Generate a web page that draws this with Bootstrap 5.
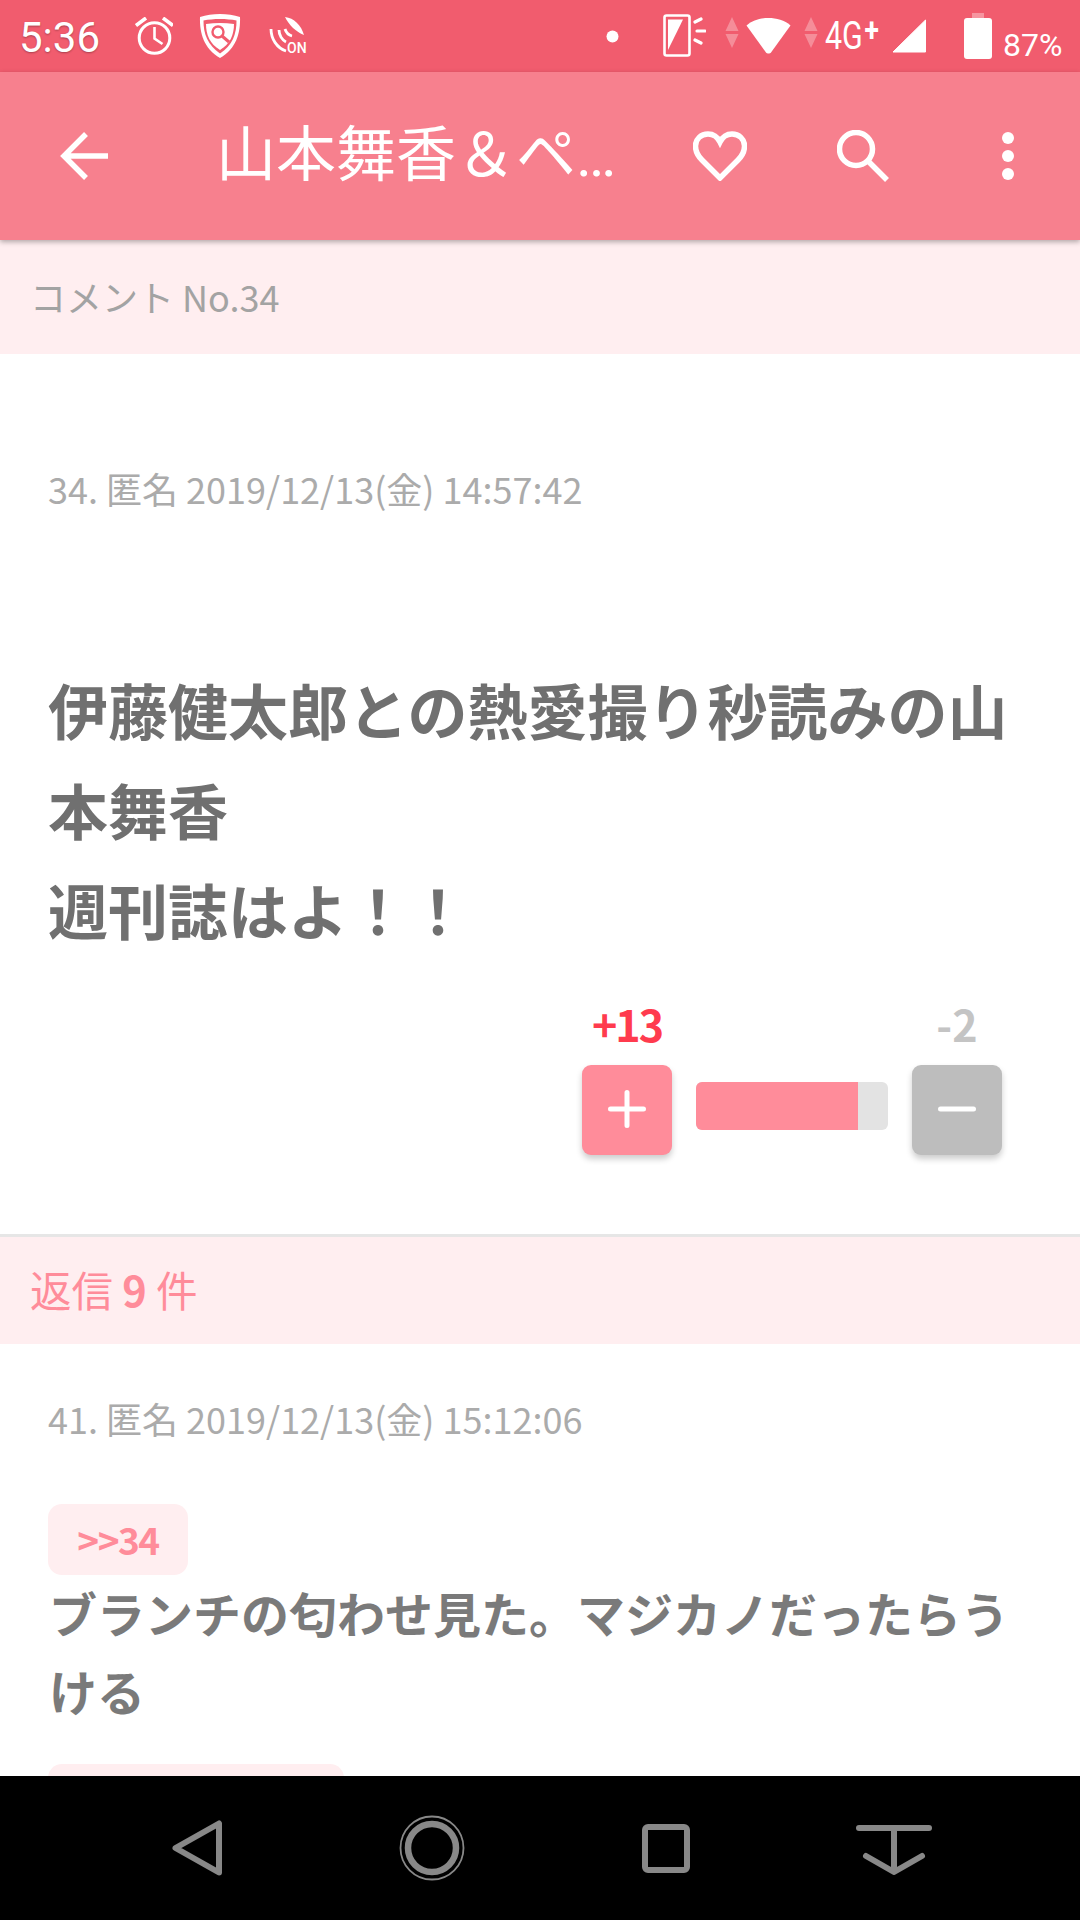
<!DOCTYPE html>
<html lang="ja">
<head>
    <meta charset="UTF-8">
    <meta name="viewport" content="width=device-width, initial-scale=1.0">
    <title>コメント No.34</title>
    <link rel="stylesheet" href="https://cdn.jsdelivr.net/npm/bootstrap@5.3.3/dist/css/bootstrap.min.css">
    <script src="https://cdn.jsdelivr.net/npm/bootstrap@5.3.3/dist/js/bootstrap.bundle.min.js"></script>
<style>
        body {
            font-family: "Noto Sans CJK JP", "Noto Sans", sans-serif;
            background: #fff;
        }
        .screen { width: 1080px; height: 1920px; }
        .flex-none { flex: none; }

        .status-bar { height: 72px; background: #f15c6e; color: #fff; font-family: Roboto, sans-serif; }
        .status-bar svg { display: block; flex: none; }
        .status-time { font-size: 42px; margin: 4px 0 0 19px; width: 116px; line-height: 68px; text-shadow: 0 1px 2px rgba(0,0,0,.3); }
        .ico-shield { margin-left: 25px; }
        .ico-wireless { margin-left: 26px; }
        .ico-dot { margin-left: auto; }
        .ico-phone { margin-left: 44px; }
        .ico-updown { margin: 0 0 7px 19px; }
        .ico-updown.second { margin-left: 13px; }
        .ico-wifi { margin-left: 7px; }
        .status-4g { font-size: 38px; line-height: 1; width: 56px; margin-left: 7px; transform: scaleX(.8); transform-origin: left; white-space: nowrap; }
        .status-4g span { font-size: 33px; font-weight: 700; position: relative; top: -8px; margin-left: 2px; }
        .ico-signal { margin-left: 11px; }
        .ico-batt { margin-left: 38px; }
        .status-pct { font-size: 32px; line-height: 1; width: 88px; padding-left: 11px; margin-top: 18px; white-space: nowrap; }

        .app-bar { height: 168px; background: #f7808e; color: #fff; box-shadow: 0 2px 5px rgba(0,0,0,.3); z-index: 2; }
        .ico-back { margin-left: 60px; }
        .app-title { font-family: Roboto, "Noto Sans CJK JP", sans-serif; font-size: 60px; font-weight: 400; line-height: 1; width: 477px; margin: 0 0 0 108px; white-space: nowrap; }
        .ico-search { margin-left: 90px; }
        .ico-more { margin-left: 113px; }

        .sect-head { background: #ffeef0; padding-left: 30px; }
        .sect-comment { height: 114px; font-size: 36px; color: #a3a3a3; padding-bottom: 2px; }
        .sect-reply { height: 107px; font-size: 41.500px; color: #ff8c9a; padding-bottom: 2px; }

        .post { padding: 107px 30px 79px 48px; border-bottom: 3px solid #e6e6e6; }
        .post-meta { font-size: 36px; line-height: 54px; color: #ababab; white-space: nowrap; }
        .post-title { font-size: 60px; line-height: 100px; font-weight: 700; color: #707070; margin: 144px -10px 0 0; }

        .vote { width: 420px; margin: 40px 48px 0 auto; }
        .vote-count { width: 90px; height: 50px; line-height: 48px; font-size: 43px; font-weight: 700; text-align: center; }
        .vote-plus { color: #ff3b4e; letter-spacing: -2px; }
        .vote-minus { color: #c4c4c4; }
        .vote-btn { width: 90px; height: 90px; border: 0; border-radius: 9px; padding: 0; box-shadow: 0 4px 6px rgba(0,0,0,.2); color: #fff; }
        .vote-btn.up { background: #ff8c9a; }
        .vote-btn.down { background: #bdbdbd; }
        .vote-btn svg { margin-top: -2px; }
        .vote-bar { width: 192px; height: 48px; margin-top: 17px; background: #e3e3e3; border-radius: 6px; }
        .vote-bar .progress-bar { background: #ff8c9a; }

        .reply { padding: 47px 40px 0 48px; }
        .quote-tag { display: block; width: 140px; height: 71px; margin: 59px 0 0 0; background: #ffeef0; border-radius: 14px; color: #ff8c9a; font-size: 37px; font-weight: 700; line-height: 71px; text-align: center; letter-spacing: -1.500px; }
        .quote-next { width: 296px; margin-top: 35px; }
        .reply-body { font-size: 48px; line-height: 78px; font-weight: 700; color: #7a7a7a; margin: -2px -10px 0 1px; }

        .nav-keys { height: 144px; background: #000; }
        .key-back { margin-left: 172px; }
        .key-home { margin-left: 177px; }
        .key-recent { margin-left: 177px; }
        .key-hide { margin-left: 166px; margin-top: 3px; }
</style>
</head>
<body>
    <div class="screen d-flex flex-column overflow-hidden">

        <!-- android status bar -->
        <div class="status-bar d-flex align-items-center flex-none">
            <span class="status-time">5:36</span>
            <svg width="38" height="38" viewBox="0 0 38 38" fill="none" stroke="#fff">
                <circle cx="19.500" cy="21" r="15.300" stroke-width="3"/>
                <path d="M19.500 10v11.500l8 5.500" stroke-width="2.600"/>
                <path d="M1 8.500L11 1M38 8.500L28 1" stroke-width="3.600"/>
            </svg>
            <svg width="44" height="46" viewBox="0 0 42 46" class="ico-shield">
                <path d="M21 1c7 0 14 1 20 3 .6 16-4 32-20 41C5 36 .4 20 1 4c6-2 13-3 20-3z" fill="#fff"/>
                <path d="M4.500 7.500c10-2 23-2 33 0 .2 13-4 25-16.500 33C9 32.500 4.300 21 4.500 7.500z" fill="#f15c6e"/>
                <path d="M7 11c9-1.500 19-1.500 28 0 0 11-4 20-14 26C11 31 7 22 7 11z" fill="#fff"/>
                <circle cx="19" cy="19" r="5.500" fill="none" stroke="#f15c6e" stroke-width="2.400"/>
                <path d="M23 23l7 6" stroke="#f15c6e" stroke-width="3"/>
            </svg>
            <svg width="40" height="38" viewBox="0 0 40 38" class="ico-wireless">
                <path d="M17 0c9 1 16 8 19 18C28 15 21 8 17 0z" fill="#fff"/>
                <g fill="none" stroke="#fff" stroke-width="2.800">
                    <path d="M3 12c0 10 6 19 15 22"/>
                    <path d="M11 13c0 5 3 10 7 12"/>
                    <path d="M17 12c1 3 3 6 7 7"/>
                </g>
                <text x="19" y="36" font-size="14" font-weight="500" fill="#fff" font-family="Roboto, sans-serif">ON</text>
            </svg>

            <svg width="13" height="13" viewBox="0 0 13 13" class="ico-dot"><circle cx="6.500" cy="6.500" r="6" fill="#fff"/></svg>
            <svg width="43" height="44" viewBox="0 0 43 44" class="ico-phone" fill="none" stroke="#fff">
                <rect x="1.500" y="1.500" width="25" height="40" rx="2" stroke-width="2.600"/>
                <path d="M5 5.500h15L5 36z" fill="#fff" stroke="none"/>
                <path d="M32 8l6-3M34 17h8M32 26l6 3" stroke-width="3.200" stroke-linecap="round"/>
            </svg>
            <svg width="14" height="31" viewBox="0 0 14 31" class="ico-updown"><path d="M7 0l6.500 14H.5zM7 31L.5 17h13z" fill="#fff" fill-opacity=".3"/></svg>
            <svg width="45" height="36" viewBox="0 0 45 36" class="ico-wifi"><path d="M22.500 0c8 0 16 2 22 7.500L25 34.500c-1 1.300-4 1.300-5 0L.5 7.500C6.500 2 14.500 0 22.500 0z" fill="#fff"/></svg>
            <svg width="14" height="31" viewBox="0 0 14 31" class="ico-updown second"><path d="M7 0l6.500 14H.5zM7 31L.5 17h13z" fill="#fff" fill-opacity=".3"/></svg>
            <span class="status-4g">4G<span>+</span></span>
            <svg width="34" height="34" viewBox="0 0 34 34" class="ico-signal"><path d="M33.500 1v32H1z" fill="#fff" stroke="#fff" stroke-linejoin="round"/></svg>
            <svg width="28" height="46" viewBox="0 0 28 46" class="ico-batt"><path d="M8 0h12v5H8z" fill="#fff" fill-opacity=".35"/><rect y="5" width="28" height="41" rx="3" fill="#fff"/></svg>
            <span class="status-pct">87%</span>
        </div>

        <!-- app bar -->
        <div class="app-bar d-flex align-items-center position-relative flex-none">
            <svg width="48" height="48" viewBox="0 0 48 48" fill="none" stroke="#fff" stroke-width="5.500" class="ico-back flex-none">
                <path d="M48 24H4M26 2L4 24l22 22"/>
            </svg>
            <h1 class="app-title">山本舞香＆ペ…</h1>
            <svg width="54" height="50" viewBox="0 0 54 50" fill="none" stroke="#fff" stroke-width="5.500" class="flex-none">
                <path d="M27 47L9 29C4 24 2.500 20 2.500 15 2.500 8 8 3 15 3c5 0 9 2 12 8 3-6 7-8 12-8 7 0 12.500 5 12.500 12 0 5-1.500 9-6.500 14z"/>
            </svg>
            <svg width="52" height="52" viewBox="0 0 52 52" fill="none" stroke="#fff" stroke-width="5.500" class="flex-none ico-search">
                <circle cx="19" cy="19" r="16.500"/>
                <path d="M32 32l18 18"/>
            </svg>
            <svg width="12" height="48" viewBox="0 0 12 48" class="flex-none ico-more" fill="#fff">
                <circle cx="6" cy="6" r="6"/><circle cx="6" cy="24" r="6"/><circle cx="6" cy="42" r="6"/>
            </svg>
        </div>

        <!-- scrolled content -->
        <div class="flex-grow-1 overflow-hidden">
            <div class="sect-head sect-comment d-flex align-items-center">コメント No.34</div>

            <div class="post">
                <div class="post-meta">34. 匿名 2019/12/13(金) 14:57:42</div>
                <h2 class="post-title">伊藤健太郎との熱愛撮り秒読みの山本舞香<br>週刊誌はよ！！</h2>

                <div class="vote">
                    <div class="d-flex justify-content-between">
                        <div class="vote-count vote-plus">+13</div>
                        <div class="vote-count vote-minus">-2</div>
                    </div>
                    <div class="d-flex justify-content-between align-items-start mt-3">
                        <button type="button" class="vote-btn up d-flex align-items-center justify-content-center">
                            <svg width="38" height="38" viewBox="0 0 38 38" stroke="#fff" stroke-width="5" stroke-linecap="round"><path d="M19 2.500v33M2.500 19h33"/></svg>
                        </button>
                        <div class="progress vote-bar">
                            <div class="progress-bar" style="width: 84.4%"></div>
                        </div>
                        <button type="button" class="vote-btn down d-flex align-items-center justify-content-center">
                            <svg width="38" height="38" viewBox="0 0 38 38" stroke="#fff" stroke-width="5" stroke-linecap="round"><path d="M2.500 19h33"/></svg>
                        </button>
                    </div>
                </div>
            </div>

            <div class="sect-head sect-reply d-flex align-items-center">返信&nbsp;<span class="fw-bold">9</span>&nbsp;件</div>

            <div class="reply">
                <div class="post-meta">41. 匿名 2019/12/13(金) 15:12:06</div>
                <a class="quote-tag text-decoration-none">&gt;&gt;34</a>
                <p class="reply-body mb-0">ブランチの匂わせ見た。マジカノだったらうける</p>
                <span class="quote-tag quote-next"></span>
            </div>
        </div>

        <!-- android nav keys -->
        <div class="nav-keys d-flex align-items-center flex-none">
            <svg width="50" height="56" viewBox="0 0 50 56" fill="none" stroke="#888" stroke-width="6" stroke-linejoin="round" class="key-back">
                <path d="M3.500 28L47 3.500v49z"/>
            </svg>
            <svg width="66" height="66" viewBox="0 0 66 66" fill="none" stroke="#888" class="key-home">
                <circle cx="33" cy="33" r="31.500" stroke-width="1.800"/>
                <circle cx="33" cy="33" r="24" stroke-width="6.500"/>
            </svg>
            <svg width="48" height="49" viewBox="0 0 48 49" fill="none" stroke="#888" stroke-width="6" class="key-recent">
                <rect x="3" y="3" width="42" height="43" rx="3"/>
            </svg>
            <svg width="76" height="50" viewBox="0 0 76 50" fill="none" stroke="#888" stroke-width="6" stroke-linecap="round" class="key-hide">
                <path d="M3 3h70"/><path d="M38 3v44" stroke-linecap="butt"/><path d="M10 31l28 16 28-16" stroke-linejoin="round"/>
            </svg>
        </div>
    </div>
</body>
</html>
